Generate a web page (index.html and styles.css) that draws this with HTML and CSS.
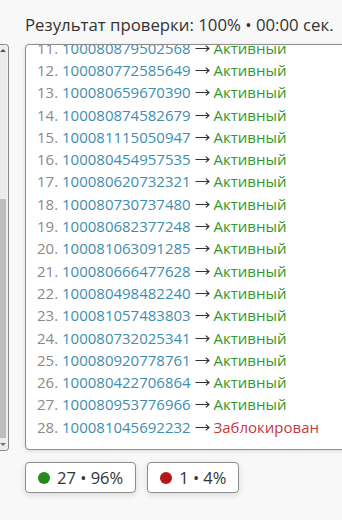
FILE: index.html
```html
<!DOCTYPE html>
<html lang="ru">
<head>
  <meta charset="UTF-8" />
  <meta name="viewport" content="width=device-width, initial-scale=1.0"/>
  <title>Результат проверки</title>
  <link rel="stylesheet" href="styles.css">
</head>
<body>
  <div class="page">
    <div class="side">
      <div class="track">
        <span class="arrow up"></span>
        <div class="thumb"></div>
        <span class="arrow down"></span>
      </div>
    </div>

    <div class="main">
      <h2 class="title">Результат проверки: 100% • 00:00 сек.</h2>

      <div class="results">
        <div class="list" id="list"></div>
      </div>

      <div class="stats">
        <div class="badge"><span class="dot green"></span>27 • 96%</div>
        <div class="badge"><span class="dot red"></span>1 • 4%</div>
      </div>
    </div>
  </div>

  <script>
    const rows = [
      ["100080879502568", 1], ["100080772585649", 1], ["100080659670390", 1],
      ["100080874582679", 1], ["100081115050947", 1], ["100080454957535", 1],
      ["100080620732321", 1], ["100080730737480", 1], ["100080682377248", 1],
      ["100081063091285", 1], ["100080666477628", 1], ["100080498482240", 1],
      ["100081057483803", 1], ["100080732025341", 1], ["100080920778761", 1],
      ["100080422706864", 1], ["100080953776966", 1], ["100081045692232", 0]
    ];
    const arrow = '<svg class="to" width="15" height="9" viewBox="0 0 15 9"><path d="M0.5 4.5H14M10.8 1.6L14 4.5L10.8 7.4" fill="none" stroke="#333" stroke-width="1.2"/></svg>';
    let html = "";
    rows.forEach(function (r, i) {
      const status = r[1]
        ? '<span class="ok">Активный</span>'
        : '<span class="bad">Заблокирован</span>';
      html += '<p><span class="num">' + (i + 11) + '.</span> <span class="id">' + r[0] + '</span> ' + arrow + ' ' + status + '</p>';
    });
    document.getElementById("list").innerHTML = html;
  </script>
</body>
</html>
```

FILE: styles.css
```css
html, body {
  margin: 0;
  overflow: hidden;
}
body {
  font-family: "Open Sans", "Noto Sans", sans-serif;
  background-color: #f8f8f8;
  color: #333;
  width: 342px;
  height: 520px;
}
.page {
  display: flex;
  gap: 16px;
  width: 700px;
}
.side {
  margin-top: 44px;
  width: 8px;
  height: 405px;
  border: 1px solid #8a8a8a;
  border-left: none;
  border-radius: 0 4px 4px 0;
  background: #f2f2f2;
  flex-shrink: 0;
}
.track {
  display: flex;
  flex-direction: column;
  height: 100%;
  width: 7px;
  background: #ececec;
}
.arrow {
  height: 12px;
  position: relative;
}
.arrow.up::after,
.arrow.down::after {
  content: "";
  position: absolute;
  left: 0;
  border-left: 3px solid transparent;
  border-right: 3px solid transparent;
}
.arrow.up::after {
  top: 4px;
  border-bottom: 3px solid #555;
}
.arrow.down::after {
  bottom: 4px;
  border-top: 3px solid #777;
}
.thumb {
  margin-top: 142px;
  flex: 1;
  background: #bdbdbd;
  margin-right: 1px;
}
.main {
  width: 330px;
  flex-shrink: 0;
}
.title {
  margin: 13px 0 0;
  font-size: 16.8px;
  font-weight: normal;
  line-height: 23px;
  color: #333;
  white-space: nowrap;
}
.results {
  margin-top: 8px;
  height: 404px;
  background: white;
  border: 1px solid #8d8d8d;
  border-radius: 4px;
  box-shadow: 0 1px 4px rgba(0,0,0,0.12);
  display: flex;
  flex-direction: column;
  justify-content: flex-end;
  overflow: hidden;
}
.list {
  padding: 0 0 11px 11px;
}
.list p {
  margin: 0;
  font-size: 15px;
  line-height: 22.3px;
  white-space: nowrap;
  color: #333;
}
.num {
  color: #8a8a8a;
}
.id {
  color: #3e8eaf;
}
.to {
  vertical-align: 1px;
}
.ok {
  color: #2f9a2f;
}
.bad {
  color: #c43a3a;
}
.stats {
  display: flex;
  gap: 11px;
  margin-top: 12px;
}
.badge {
  display: flex;
  align-items: center;
  gap: 7px;
  height: 29px;
  padding: 0 12px;
  background: white;
  border: 1px solid #8d8d8d;
  border-radius: 4px;
  box-shadow: 0 2px 6px rgba(0,0,0,0.12);
  font-size: 16.5px;
  color: #333;
}
.dot {
  width: 12px;
  height: 12px;
  border-radius: 50%;
}
.dot.green {
  background: #238a1c;
}
.dot.red {
  background: #b51818;
}
```
